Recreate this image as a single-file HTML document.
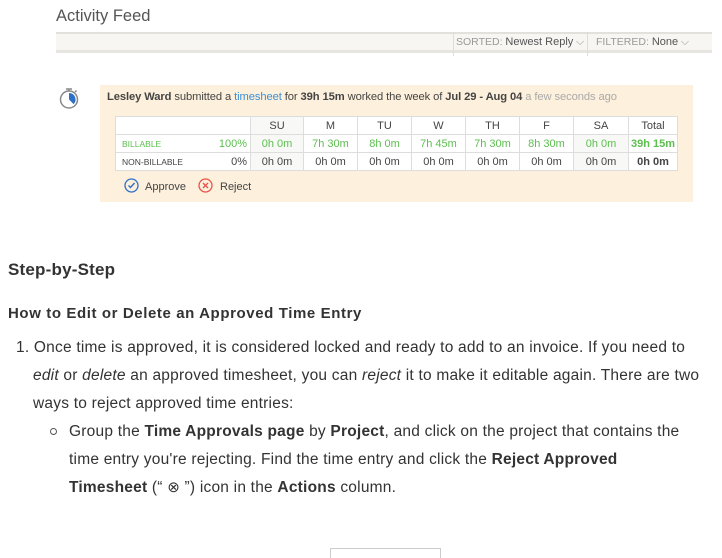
<!DOCTYPE html>
<html><head><meta charset="utf-8"><style>
*{margin:0;padding:0;box-sizing:border-box}
body{width:722px;height:552px;overflow:hidden;background:#fff;font-family:"Liberation Sans",sans-serif;color:#333;position:relative}
.a{position:absolute;white-space:nowrap}
.bar{position:absolute;left:56px;top:32px;width:656px;height:21px;background:#f7f6f2;border-top:2px solid #e2e1dc;border-bottom:3px solid #e6e5e0}
.box{position:absolute;left:100px;top:85px;width:593px;height:117px;background:#fdf0dc}
table{position:absolute;left:115px;top:116px;border-collapse:collapse;background:#fff;font-size:11px;color:#444}
td{border:1px solid #ddd;height:18px;text-align:center;padding:0}
.g{color:#5cbf4f}
.l{line-height:28px;font-size:15.5px;color:#333;letter-spacing:0.22px}
</style></head><body>
<div class="a" style="left:56px;top:7px;font-size:16.5px;color:#555">Activity Feed</div>
<div class="bar">
 <div class="a" style="left:397px;top:-2px;height:24px;border-left:1px solid #ddd"></div>
 <div class="a" style="left:531px;top:-2px;height:24px;border-left:1px solid #ddd"></div>
 <div class="a" style="left:400px;top:2px;font-size:10.5px;color:#999">SORTED: <span style="color:#555;font-size:11px">Newest Reply</span> ⌵</div>
 <div class="a" style="left:540px;top:2px;font-size:10.5px;color:#999">FILTERED: <span style="color:#555;font-size:11px">None</span> ⌵</div>
</div>
<svg class="a" style="left:58px;top:86px" width="22" height="24" viewBox="0 0 22 24"><circle cx="11" cy="13.5" r="8.5" fill="#fff" stroke="#888" stroke-width="1.5"/><path d="M8 3h6M11 3v2M17 6l1.5-1.5" stroke="#888" stroke-width="1.5" fill="none"/><path d="M11 13.5V7a6.5 6.5 0 0 1 4.6 11.1z" fill="#2e6fc7"/></svg>
<div class="box"></div>
<div class="a" style="left:107px;top:91px;font-size:11.2px;color:#444;letter-spacing:-0.1px"><b>Lesley Ward</b> submitted a <span style="color:#3b8fd6">timesheet</span> for <b>39h 15m</b> worked the week of <b>Jul 29 - Aug 04</b> <span style="color:#aaa">a few seconds ago</span></div>
<table>
<tr><td style="width:135px" colspan="2"></td><td style="width:53px;background:#f8f8f6">SU</td><td style="width:54px">M</td><td style="width:54px">TU</td><td style="width:54px">W</td><td style="width:54px">TH</td><td style="width:54px">F</td><td style="width:55px">SA</td><td style="width:49px">Total</td></tr>
<tr><td class="g" style="text-align:left;padding-left:6px;font-size:8.5px;border-right:0">BILLABLE</td><td class="g" style="text-align:right;padding-right:3px;border-left:0">100%</td><td class="g" style="background:#f8f8f6">0h 0m</td><td class="g">7h 30m</td><td class="g">8h 0m</td><td class="g">7h 45m</td><td class="g">7h 30m</td><td class="g">8h 30m</td><td class="g" style="background:#f8f8f6">0h 0m</td><td class="g"><b>39h 15m</b></td></tr>
<tr><td style="text-align:left;padding-left:6px;font-size:8.5px;border-right:0">NON-BILLABLE</td><td style="text-align:right;padding-right:3px;border-left:0">0%</td><td style="background:#f8f8f6">0h 0m</td><td>0h 0m</td><td>0h 0m</td><td>0h 0m</td><td>0h 0m</td><td>0h 0m</td><td style="background:#f8f8f6">0h 0m</td><td><b>0h 0m</b></td></tr>
</table>
<svg class="a" style="left:124px;top:178px" width="15" height="15"><circle cx="7.5" cy="7.5" r="6.5" fill="none" stroke="#2e6fc7" stroke-width="1.3"/><path d="M4.5 7.5l2 2 4-4.5" fill="none" stroke="#2e6fc7" stroke-width="1.4"/></svg>
<div class="a" style="left:145px;top:181px;font-size:11px;color:#444">Approve</div>
<svg class="a" style="left:198px;top:178px" width="15" height="15"><circle cx="7.5" cy="7.5" r="6.5" fill="none" stroke="#e8534a" stroke-width="1.3"/><path d="M5 5l5 5M10 5l-5 5" stroke="#e8534a" stroke-width="1.4"/></svg>
<div class="a" style="left:220px;top:181px;font-size:11px;color:#444">Reject</div>
<div class="a" style="left:8px;top:260px;font-size:17px;font-weight:bold;color:#333;letter-spacing:0.2px">Step-by-Step</div>
<div class="a" style="left:8px;top:305px;font-size:15px;font-weight:bold;color:#333;letter-spacing:0.6px">How to Edit or Delete an Approved Time Entry</div>
<div class="a l" style="left:16px;top:334px">1. Once time is approved, it is considered locked and ready to add to an invoice. If you need to</div>
<div class="a l" style="left:33px;top:362px"><i>edit</i> or <i>delete</i> an approved timesheet, you can <i>reject</i> it to make it editable again. There are two</div>
<div class="a l" style="left:33px;top:390px">ways to reject approved time entries:</div>
<div class="a" style="left:50px;top:428px;width:7px;height:7px;border:1px solid #555;border-radius:50%"></div>
<div class="a l" style="left:69px;top:418px">Group the <b>Time Approvals page</b> by <b>Project</b>, and click on the project that contains the</div>
<div class="a l" style="left:69px;top:446px">time entry you're rejecting. Find the time entry and click the <b>Reject Approved</b></div>
<div class="a l" style="left:69px;top:474px"><b>Timesheet</b> (“ <span style="font-size:15px">⊗</span> ”) icon in the <b>Actions</b> column.</div>
<div class="a" style="left:330px;top:548px;width:111px;height:10px;border:1px solid #ccc;border-bottom:0"></div>
</body></html>
